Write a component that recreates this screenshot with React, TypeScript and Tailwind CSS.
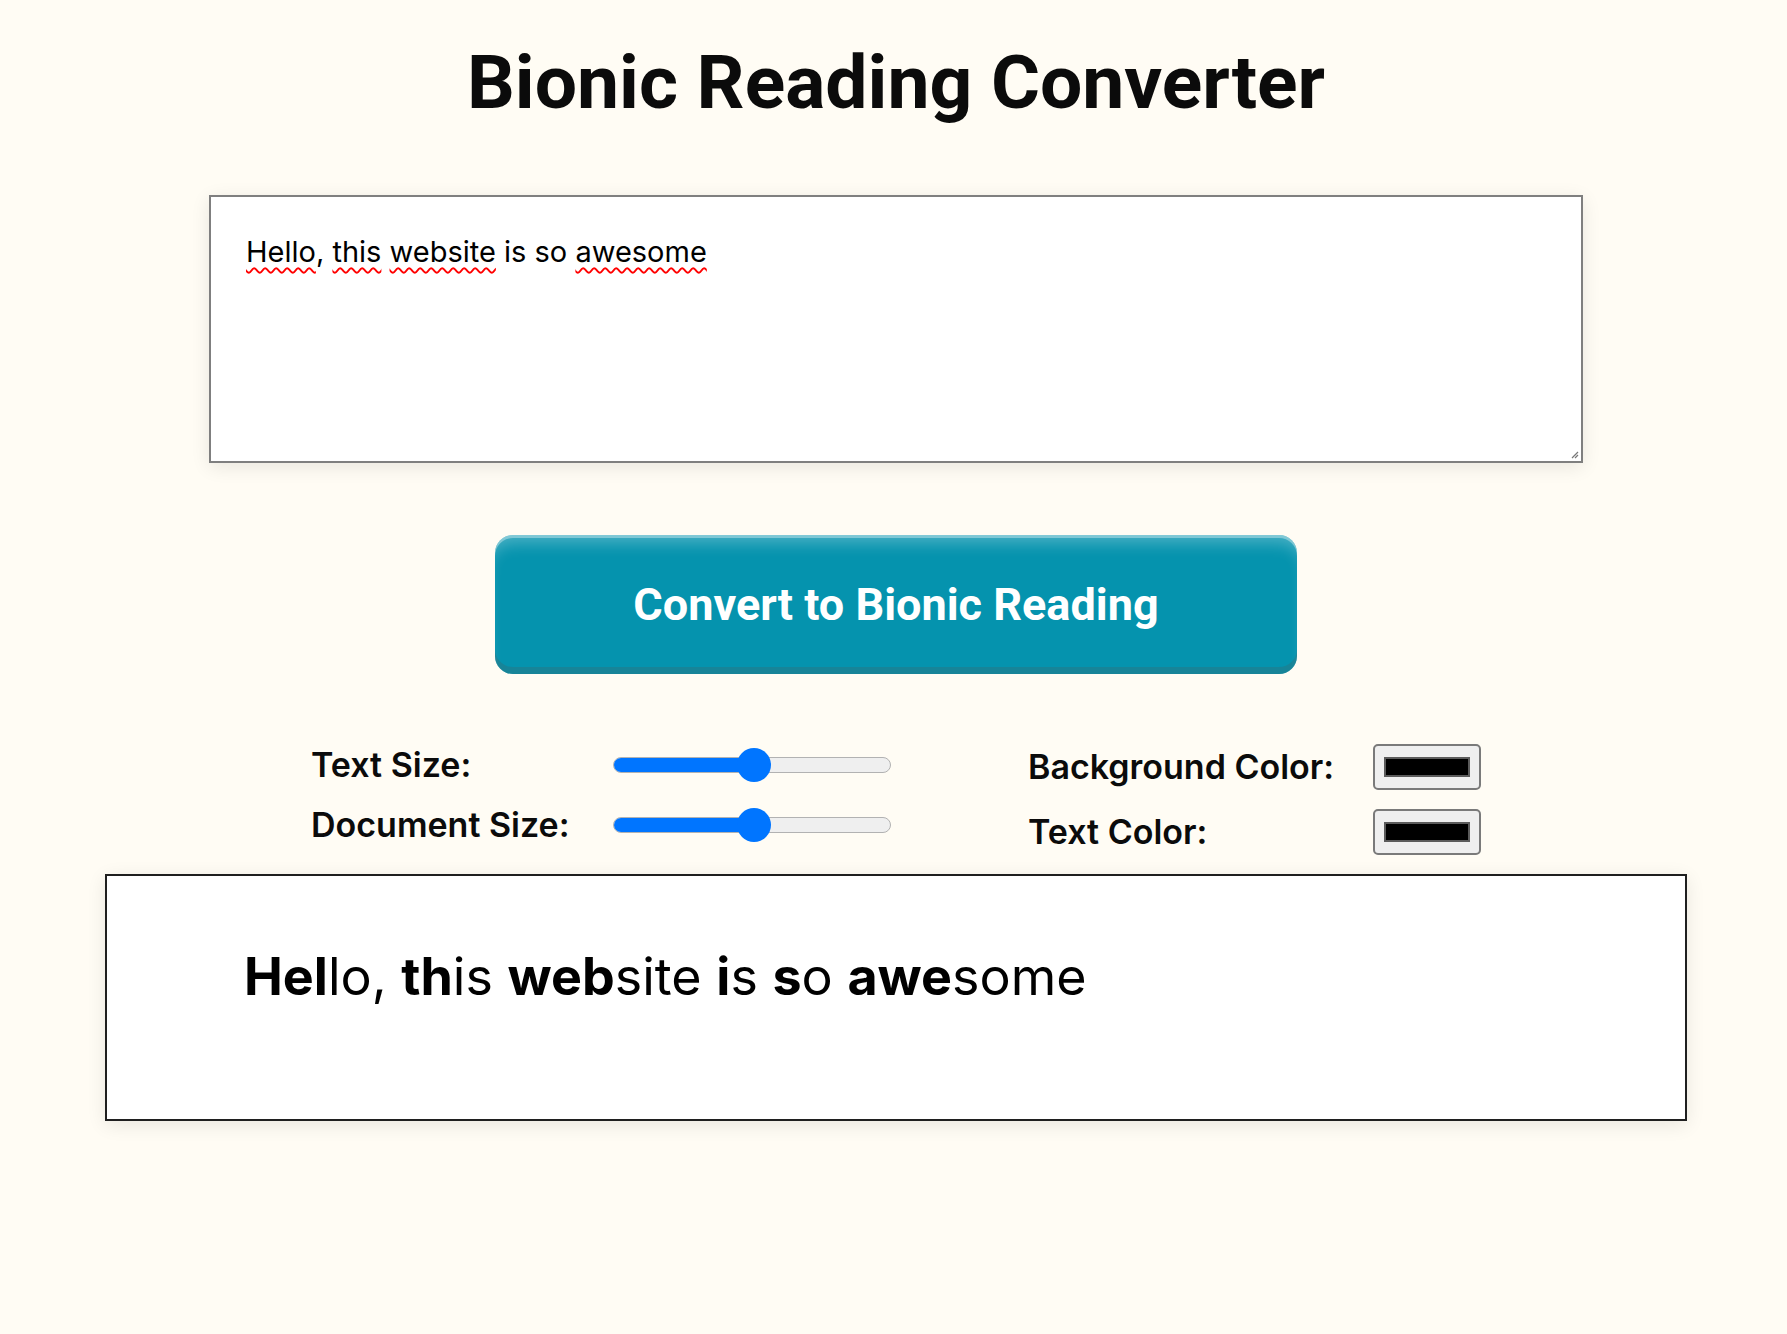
import { useState } from 'react';

const MISSPELT = new Set(['Hello', 'this', 'website', 'awesome']);

// bold the first half of each word, punctuation included
function bionic(word: string) {
  const n = Math.floor(word.length / 2);
  return { head: word.slice(0, n), tail: word.slice(n) };
}

function Slider({ value }: { value: number }) {
  return (
    <div className="relative h-[44px] w-[278px] flex items-center">
      <div className="h-[16px] w-full rounded-full bg-[#efefef] border border-[#b2b2b2] overflow-hidden">
        <div className="h-full bg-[#0075ff]" style={{ width: `${value}%` }} />
      </div>
      <div
        className="absolute top-[5px] h-[34px] w-[34px] rounded-full bg-[#0075ff]"
        style={{ left: `calc(${value}% - 15px)` }}
      />
    </div>
  );
}

function Swatch() {
  return (
    <div className="h-[46px] w-[108px] rounded-[5px] border-2 border-[#7a7a7a] bg-[#efefef] px-[9px] py-[11px]">
      <div className="h-full w-full border-2 border-[#5b5b5b] bg-black" />
    </div>
  );
}

export default function App() {
  const [text] = useState('Hello, this website is so awesome');
  const words = text.split(' ');
  return (
    <div className="min-h-[1334px] bg-[#fffcf4] font-['Inter',sans-serif] text-[#0b0b0b] flex flex-col items-center pt-[45px] pl-[5px]">
      <h1 className="font-['Roboto',sans-serif] text-[75px] leading-none font-bold">Bionic Reading Converter</h1>

      <div className="relative mt-[75px] h-[268px] w-[1374px] border-2 border-[#7f7f7f] bg-white pl-[35px] pt-[40px] text-[29px] leading-none text-black shadow-[0_4px_18px_rgba(0,0,0,0.09)]">
        {words.map((w, i) => {
          const bare = w.replace(/[^A-Za-z]/g, '');
          const punct = w.slice(bare.length);
          return (
            <span key={i}>
              {i > 0 && ' '}
              {MISSPELT.has(bare) ? (
                <span className="underline decoration-wavy decoration-[#ff0000] decoration-2 underline-offset-[5px]">{bare}</span>
              ) : (
                bare
              )}
              {punct}
            </span>
          );
        })}
        <svg className="absolute bottom-[2px] right-[2px]" width="10" height="10" viewBox="0 0 10 10">
          <path d="M9 3 L3 9 M9 6 L6 9" stroke="#777" strokeWidth="1.2" />
        </svg>
      </div>

      <button className="mt-[72px] h-[139px] w-[802px] rounded-[18px] bg-[#0593ae] font-['Roboto',sans-serif] text-[45px] leading-none font-bold text-white shadow-[inset_0_3px_0_rgba(255,255,255,0.35),inset_0_16px_16px_-8px_rgba(255,255,255,0.28),inset_0_-7px_0_rgba(50,110,120,0.4)]">
        Convert to Bionic Reading
      </button>

      <div className="mt-[69px] flex items-start gap-[137px] text-[34px] leading-none font-semibold">
        <div className="grid grid-cols-[302px_278px] gap-y-[16px]">
          <div className="flex h-[44px] items-center">Text Size:</div>
          <Slider value={50} />
          <div className="flex h-[44px] items-center">Document Size:</div>
          <Slider value={50} />
        </div>
        <div className="mt-px grid grid-cols-[345px_108px] gap-y-[19px]">
          <div className="flex h-[46px] items-center">Background Color:</div>
          <Swatch />
          <div className="flex h-[46px] items-center">Text Color:</div>
          <Swatch />
        </div>
      </div>

      <div className="mt-[19px] h-[247px] w-[1582px] border-2 border-[#1f1f1f] bg-white pl-[137px] pt-[75px] text-[52px] leading-none text-black shadow-[0_4px_18px_rgba(0,0,0,0.09)]">
        {words.map((w, i) => {
          const { head, tail } = bionic(w);
          return (
            <span key={i}>
              {i > 0 && ' '}
              <b className="font-bold">{head}</b>
              {tail}
            </span>
          );
        })}
      </div>
    </div>
  );
}
